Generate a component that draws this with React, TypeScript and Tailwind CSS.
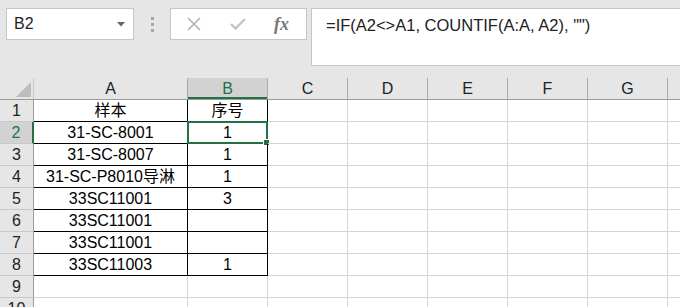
import React from 'react';

const cols = ['A', 'B', 'C', 'D', 'E', 'F', 'G'];
const colW = ['w-[154px]', 'w-[80px]', 'w-[80px]', 'w-[80px]', 'w-[80px]', 'w-[80px]', 'w-[80px]'];

const data: [string, string][] = [
  ['样本', '序号'],
  ['31-SC-8001', '1'],
  ['31-SC-8007', '1'],
  ['31-SC-P8010导淋', '1'],
  ['33SC11001', '3'],
  ['33SC11001', ''],
  ['33SC11001', ''],
  ['33SC11003', '1'],
];

const font = "font-['Liberation_Sans','Noto_Sans_CJK_SC',sans-serif]";

const FormulaBar: React.FC = () => (
  <div className="h-[78px] flex items-start bg-[#e6e6e6] pt-2">
    {/* name box */}
    <div className="ml-[6px] w-[128px] h-[32px] bg-white border border-[#c6c6c6] flex items-center justify-between pl-[7px] pr-[8px]">
      <span className="text-[16px] text-[#222]">B2</span>
      <svg width="8" height="5" viewBox="0 0 8 5">
        <path d="M0 0h8L4 4.5z" fill="#666" />
      </svg>
    </div>
    {/* grip dots */}
    <div className="w-[36px] h-[32px] flex flex-col items-center justify-center gap-[3px]">
      <div className="w-[3px] h-[3px] bg-[#a6a6a6]" />
      <div className="w-[3px] h-[3px] bg-[#a6a6a6]" />
      <div className="w-[3px] h-[3px] bg-[#a6a6a6]" />
    </div>
    {/* buttons */}
    <div className="w-[137px] h-[32px] bg-white border border-[#c6c6c6] flex items-center">
      <div className="w-[44px] flex justify-center pl-[2px]">
        <svg width="14" height="14" viewBox="0 0 14 14">
          <path d="M1 1l12 12M13 1L1 13" stroke="#b3b3b3" strokeWidth="1.6" />
        </svg>
      </div>
      <div className="w-[44px] flex justify-center pl-[2px]">
        <svg width="16" height="12" viewBox="0 0 16 12">
          <path d="M1 6l4.5 4.5L15 1" stroke="#c3c3c3" strokeWidth="2.4" fill="none" />
        </svg>
      </div>
      <div className="flex-1 flex justify-center pr-[2px]">
        <span className="font-['Liberation_Serif',serif] italic font-bold text-[18px] text-[#777] leading-none">fx</span>
      </div>
    </div>
    {/* formula input */}
    <div className="ml-[4px] flex-1 h-[58px] bg-white border border-[#c6c6c6] border-r-0 pl-[14px] pt-[4px]">
      <span className="text-[16.5px] text-[#222] whitespace-pre">=IF(A2{'<>'}A1, COUNTIF(A:A, A2), "")</span>
    </div>
  </div>
);

const App: React.FC = () => {
  const rows = Array.from({ length: 10 }, (_, i) => i + 1);
  return (
    <div className={`w-[680px] h-[307px] overflow-hidden bg-white ${font}`}>
      <FormulaBar />
      {/* column headers */}
      <div className="flex h-[22px] bg-[#e6e6e6] border-b border-[#9b9b9b]">
        <div className="w-[34px] border-r border-[#c8c8c8] relative overflow-hidden">
          <svg className="absolute right-[2px] bottom-[2px]" width="15" height="15" viewBox="0 0 15 15">
            <path d="M15 0V15H0z" fill="#bcbcbc" />
          </svg>
        </div>
        {cols.map((c, i) => {
          const sel = c === 'B';
          return (
            <div
              key={c}
              className={`${colW[i]} shrink-0 flex items-center justify-center text-[16px] border-r ${
                sel
                  ? 'bg-[#d2d2d2] text-[#217346] border-[#ababab] shadow-[inset_0_-2px_0_#217346]'
                  : 'text-[#222] border-[#ababab]'
              }`}
            >
              {c}
            </div>
          );
        })}
        <div className="flex-1" />
      </div>
      {/* body */}
      {rows.map((r) => {
        const row = data[r - 1];
        const inTable = r <= 8;
        const sel = r === 2;
        return (
          <div key={r} className="flex h-[22px]">
            <div
              className={`w-[34px] shrink-0 flex items-center justify-center text-[16px] border-b border-[#c8c8c8] ${
                sel
                  ? 'bg-[#d2d2d2] text-[#217346] border-r-2 border-r-[#217346]'
                  : 'bg-[#e6e6e6] text-[#222] border-r border-r-[#9b9b9b]'
              }`}
            >
              {r}
            </div>
            {cols.map((c, i) => {
              const isTable = inTable && i < 2;
              const isSel = sel && c === 'B';
              const border = isTable
                ? 'border-r border-b border-black'
                : 'border-r border-b border-[#d4d4d4]';
              const text = isTable ? row[i] : '';
              return (
                <div
                  key={c}
                  className={`${colW[i]} shrink-0 relative flex items-center justify-center text-[16px] text-black whitespace-nowrap ${border}`}
                >
                  {text}
                  {isSel && (
                    <>
                      <div className="absolute -left-[1px] -top-[1px] -right-[1px] -bottom-[1px] border-2 border-[#217346]" />
                      <div className="absolute -right-[3px] -bottom-[3px] w-[5px] h-[5px] bg-[#217346] border border-white box-content" />
                    </>
                  )}
                </div>
              );
            })}
            <div className="flex-1 border-b border-[#d4d4d4]" />
          </div>
        );
      })}
    </div>
  );
};

export default App;
